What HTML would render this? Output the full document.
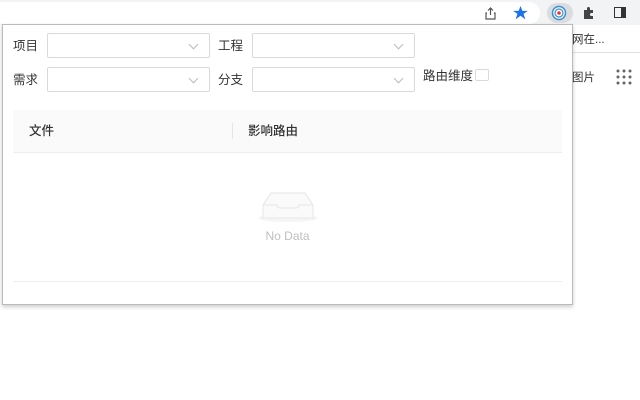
<!DOCTYPE html>
<html><head><meta charset="utf-8"><style>
*{box-sizing:border-box;margin:0;padding:0}
body{width:640px;height:400px;background:#fff;position:relative;overflow:hidden;font-family:"Liberation Sans","Noto Sans CJK SC",sans-serif;font-size:12px;color:#333}
.bar{position:absolute;left:0;top:0;width:640px;height:25px;background:#f1f3f4}
.addr{position:absolute;left:0;top:2px;width:540px;height:22px;background:#fff;border-radius:0 11px 11px 0}
.sep{position:absolute;left:572px;top:52px;width:68px;height:1px;background:#e0e0e0}
.pop{position:absolute;left:2px;top:24px;width:571px;height:281px;background:#fff;border:1px solid #bbb;box-shadow:0 2px 4px rgba(0,0,0,.2)}
.lbl{position:absolute;font-size:12.5px;color:#333;line-height:16px}
.sel{position:absolute;height:25px;border:1px solid #d9d9d9;border-radius:2px;background:#fff}
.sel:after{content:"";position:absolute;right:12px;top:7px;width:6px;height:6px;border-right:1px solid #bbb;border-bottom:1px solid #bbb;transform:rotate(45deg)}
.thead{position:absolute;left:10px;top:85px;width:549px;height:43px;background:#fafafa;border-bottom:1px solid #eee}
</style></head><body>
<div class="bar"><div class="addr"></div>
<svg style="position:absolute;left:484px;top:7px" width="13" height="13" viewBox="0 0 13 13" fill="none" stroke="#555" stroke-width="1.2"><path d="M6.5 1v7M4 3.5l2.5-2.5 2.5 2.5M3 6H2v6h9V6h-1"/></svg>
<svg style="position:absolute;left:513px;top:6px" width="15" height="14" viewBox="0 0 24 23"><path fill="#1a73e8" d="M12 0l3 8h9l-7 5 3 9-8-6-8 6 3-9-7-5h9z"/></svg>
<div style="position:absolute;left:547px;top:3px;width:26px;height:20px;border-radius:10px;background:#dadce0"></div>
<svg style="position:absolute;left:551px;top:5px" width="16" height="16" viewBox="0 0 16 16"><circle cx="8" cy="8" r="6.5" fill="#fff" stroke="#3a8fd0" stroke-width="1.5"/><circle cx="8" cy="8" r="4" fill="none" stroke="#3a8fd0" stroke-width="1.2"/><circle cx="8" cy="8" r="1.8" fill="#e53935"/></svg>
<svg style="position:absolute;left:582px;top:6px" width="14" height="14" viewBox="0 0 14 14"><path fill="#444" d="M2 4h3V2.5a1.5 1.5 0 013 0V4h3v3h-1.5a1.5 1.5 0 000 3H11v3H2z"/></svg>
<div style="position:absolute;left:614px;top:7px;width:12px;height:11px;border:1.5px solid #333"><div style="position:absolute;right:0;top:0;width:4px;height:100%;background:#333"></div></div>
</div>
<div style="position:absolute;left:572px;top:31px;font-size:11.5px;color:#333">网在...</div>
<div class="sep"></div>
<div style="position:absolute;left:572px;top:69px;font-size:11.5px;color:#333">图片</div>
<svg style="position:absolute;left:616px;top:69px" width="16" height="16" viewBox="0 0 16 16" fill="#666"><circle cx="2" cy="2" r="1.5"/><circle cx="8" cy="2" r="1.5"/><circle cx="14" cy="2" r="1.5"/><circle cx="2" cy="8" r="1.5"/><circle cx="8" cy="8" r="1.5"/><circle cx="14" cy="8" r="1.5"/><circle cx="2" cy="14" r="1.5"/><circle cx="8" cy="14" r="1.5"/><circle cx="14" cy="14" r="1.5"/></svg>
<div class="pop">
<div class="lbl" style="left:10px;top:13px">项目</div>
<div class="sel" style="left:44px;top:8px;width:163px"></div>
<div class="lbl" style="left:215px;top:13px">工程</div>
<div class="sel" style="left:249px;top:8px;width:163px"></div>
<div class="lbl" style="left:10px;top:47px">需求</div>
<div class="sel" style="left:44px;top:42px;width:163px"></div>
<div class="lbl" style="left:215px;top:47px">分支</div>
<div class="sel" style="left:249px;top:42px;width:163px"></div>
<div class="lbl" style="left:420px;top:43px">路由维度</div>
<div style="position:absolute;left:472px;top:44px;width:14px;height:12px;border:1px solid #d9d9d9;border-radius:2px"></div>
<div class="thead">
<div style="position:absolute;left:16px;top:13px;font-weight:500;font-size:12.5px;line-height:16px;color:#333">文件</div>
<div style="position:absolute;left:219px;top:13px;width:1px;height:16px;background:#e5e5e5"></div>
<div style="position:absolute;left:235px;top:13px;font-weight:500;font-size:12.5px;line-height:16px;color:#333">影响路由</div>
</div>
<svg style="position:absolute;left:255px;top:164px" width="60" height="34" viewBox="0 0 60 34"><ellipse cx="30" cy="29" rx="30" ry="4" fill="#f5f5f5"/><path d="M5 16l8-12h34l8 12v13H5z" fill="#fafafa" stroke="#e6e6e6"/><path d="M5 16h14a3 3 0 003 3h16a3 3 0 003-3h14" fill="none" stroke="#e6e6e6"/></svg>
<div style="position:absolute;left:0;width:569px;top:204px;text-align:center;color:#bfbfbf;font-size:12px">No Data</div>
<div style="position:absolute;left:10px;top:256px;width:549px;height:1px;background:#eee"></div>
</div>
</body></html>
